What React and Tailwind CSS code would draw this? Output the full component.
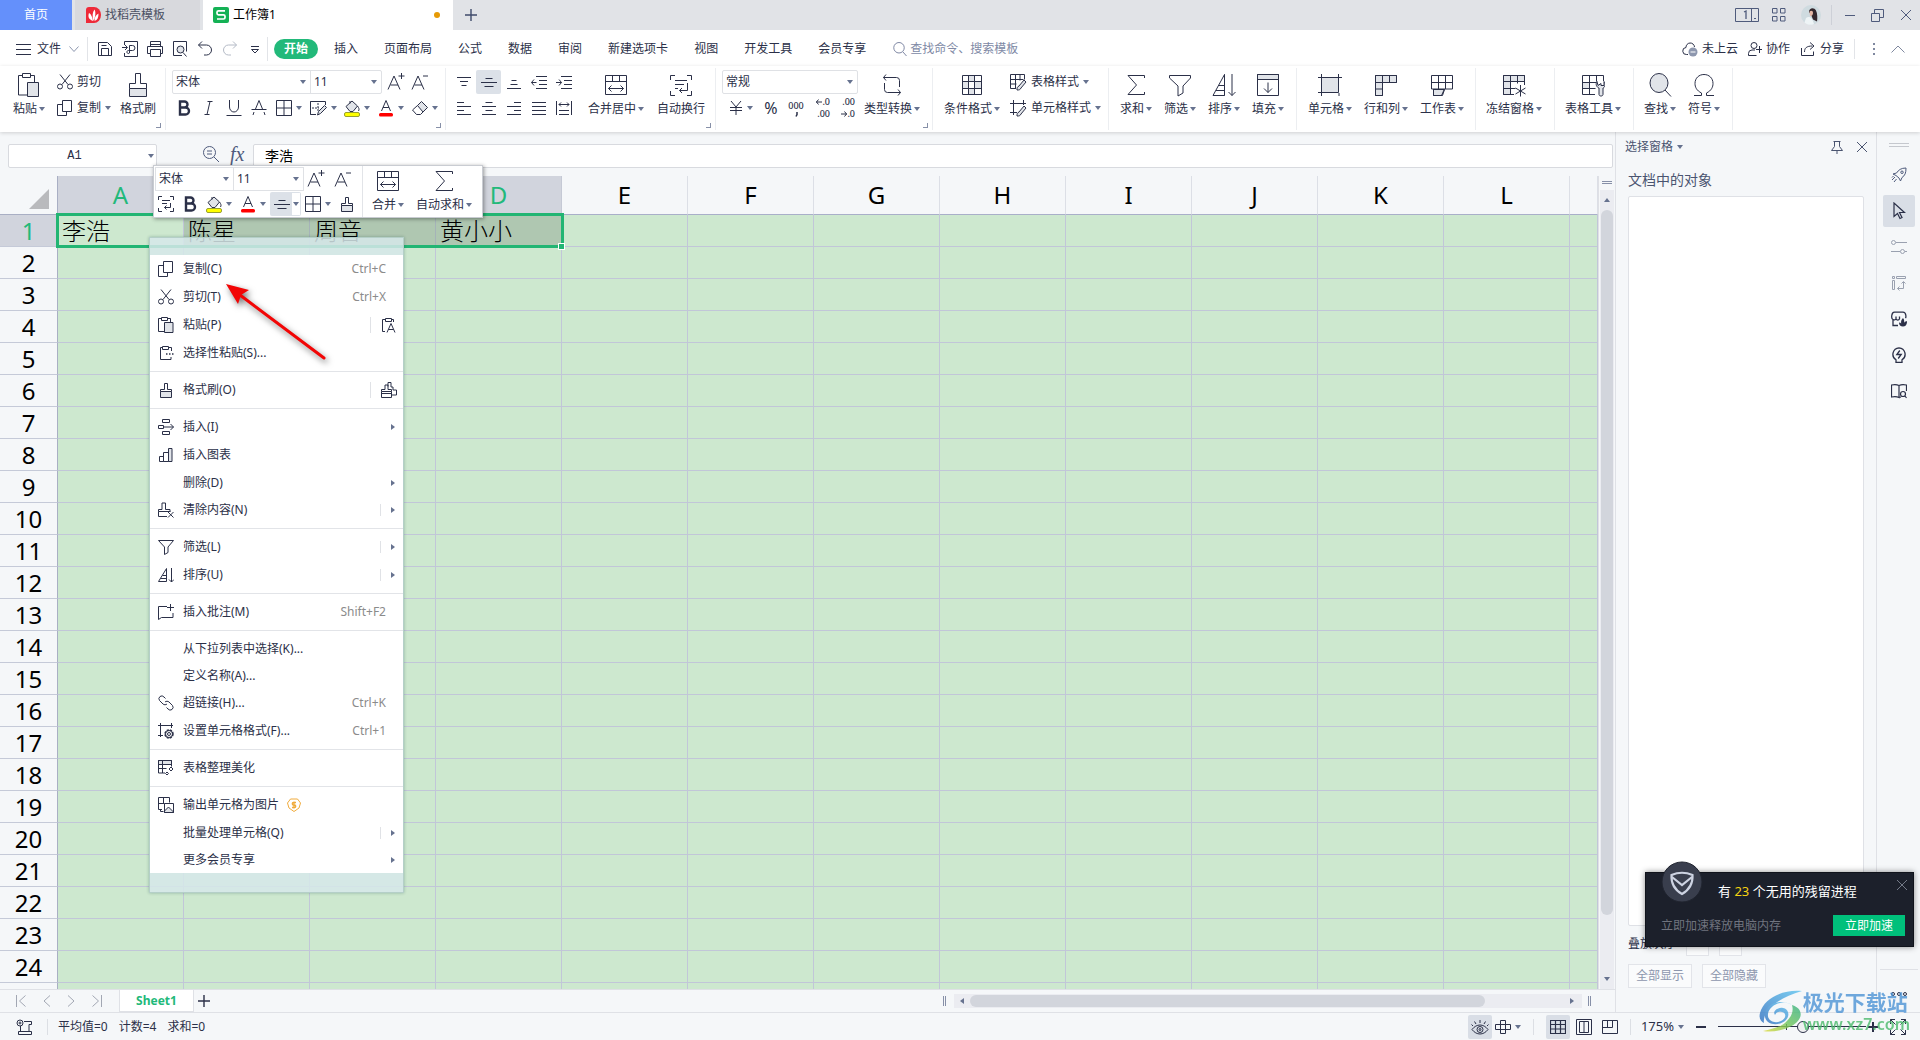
import { useState } from "react";

const SHADE = "#e1e4e9";

// icons: [width, height, drawing]
const icons = {
	caret: [6, 4, <path d="M0 0h6L3 4z" fill="#66728f" stroke="none" />],
	caretRight: [4, 6, <path d="M0 0v6l4-3z" fill="#66728f" stroke="none" />],
	plus: [12, 12, <path d="M6 0v12M0 6h12" strokeWidth="1.400" />],
	close: [12, 12, <path d="M1 1l10 10M11 1L1 11" />],
	burger: [15, 12, <path d="M0 1.5h15M0 6.5h15M0 11.5h15" />],
	chevronDown: [10, 8, <path d="M.5 1.5L5 6.5l4.5-5" />],
	chevronUp: [14, 8, <path d="M.5 7.5L7 1l6.5 6.5" />],
	save: [16, 16, <path d="M1.500 1.500h9l4 4v9h-13zM4.500 14.500v-7h7v7M4.500 4.500h5" />],
	exportFile: [16, 16, <path d="M2.500 4V.5h13v15h-13V12M0 6.500h5M3 4l2.500 2.500L3 9M7.500 12v-7.500h3a2 2 0 0 1 0 5H6.500a1.500 1.500 0 1 0 1 2.500" />],
	print: [16, 16, <path d="M3.500 5.500v-5h10v5M3.500 12.500h-3v-7h15v7h-2M3.500 8.500h10v7h-10zM3.500 3.500h10" />],
	preview: [16, 16, <><path d="M10 14.500H1.500V.5h13v10" /><circle cx="8.500" cy="8.500" r="3.500" fill={SHADE} /><path d="M11 11.500l3.500 4" /></>],
	undo: [16, 16, <path d="M5 .5L1.500 4L5 7.500M1.500 4h8a5 5 0 0 1 0 10H7" />],
	redo: [16, 16, <path d="M11 .5l3.500 3.500L11 7.500M14.500 4h-8a5 5 0 0 0 0 10H9" />],
	more: [8, 9, <path d="M0 1.500h8M.5 4.500l3.500 3.500l3.500-3.500z" />],
	search: [14, 16, <path d="M6 1.500a5 5 0 1 1 0 10.500a5 5 0 0 1 0-10.500zM10 11l3.500 4" />],
	cloud: [16, 16, <><path d="M6 13.500H4.500a3.500 3.500 0 0 1-.5-7a4.200 4.200 0 0 1 8.500-.5" /><circle cx="11" cy="11" r="4.500" fill="#8d97ae" stroke="none" /><path d="M8.500 11h5" stroke="#fff" /></>],
	person: [14, 16, <path d="M6 1.500a3 3 0 1 1 0 6a3 3 0 0 1 0-6zM8.500 14.500h-8v-2a3.500 3.500 0 0 1 3.500-3.500h3M11.500 5v7M8 8.500h6" />],
	share: [16, 16, <path d="M1.500 7v7.500h12v-4M4.500 11c0-4 2-6 8-6M10 1.500l4 3.500l-4 3.500" />],
	window1: [24, 14, <><path d="M.5.5h23v13h-23zM16.500.5v13M19 10.500h2" /><path d="M9 4l2-1v8" strokeWidth="1.300" /></>],
	apps: [14, 14, <path d="M.5.5h4.500v4.500H.5zM8.500.5h4.500v4.500H8.500zM.5 8.500h4.500v4.500H.5zM8.500 8.500h4.500v4.500H8.500z" />],
	minimize: [10, 12, <path d="M0 6.500h10" />],
	restore: [13, 13, <path d="M.5 4.500h8v8h-8zM3.500 4.500v-4h9v8h-4" />],

	paste: [24, 24, <><path d="M10 22H1.500V2.500h4M13.500 2.500h4V9M5.500.5h8v4h-8z" /><path d="M10.500 9.500h11v14h-11z" fill={SHADE} /></>],
	cut: [16, 16, <path d="M3 .5l8 10M13 .5l-8 10M3 10a2.500 2.500 0 1 1 0 5a2.500 2.500 0 0 1 0-5zM13 10a2.500 2.500 0 1 1 0 5a2.500 2.500 0 0 1 0-5z" />],
	copy: [16, 16, <path d="M5.500.5h9v11h-9zM5.500 4.500h-5v11h9v-4" />],
	brush: [24, 24, <><path d="M3.500 15.500h17v8h-17z" fill={SHADE} /><path d="M3.500 15.500v-5h6V.5h5v10h6v5" /></>],
	brushSm: [16, 16, <><path d="M2.500 9.500h11v6h-11z" fill={SHADE} /><path d="M2.500 9.500v-2h4v-6h3v6h4v2" /></>],
	fontUp: [18, 18, <path d="M1 16.500L7 3l6 13.500M3.500 12h7.500M14.500 0v6M11.500 3h6" />],
	fontDown: [18, 18, <path d="M1 16.500L7 3l6 13.500M3.500 12h7.500M12 3h5" />],
	bold: [16, 16, <path d="M4 1.500h4.500a3 3 0 0 1 0 6H4zM4 7.500h5.500a3.200 3.200 0 0 1 0 7H4z" strokeWidth="2.400" />],
	italic: [16, 16, <path d="M6.500 1.500h5M3.500 14.500h5M9 1.500L6 14.500" />],
	underline: [16, 16, <path d="M3.500 0v7a4.500 5 0 0 0 9 0V0M.5 15.500h15" />],
	strike: [16, 16, <path d="M4.500 9L8 .5L11.500 9M3 12l-1 3M13 12l1 3M.5 9.500h15" />],
	border: [16, 16, <path d="M.5.5h15v15H.5zM8 .5v15M.5 8h15" />],
	borderPen: [17, 16, <><path d="M6 14.500H.5V1.500h15V5M.5 1.500v13" /><path d="M8 3v8M2 8h7" strokeDasharray="2 1" /><path d="M7.500 15l1-3.500l6-6l2 2l-6 6z" fill={SHADE} /></>],
	fill: [16, 17, <><path d="M2 6.500L8 1l5.500 5L9 11.500H6z" fill={SHADE} /><path d="M6 3.500V1M13.500 6c1.500 2 2 3.500 1 5" /><rect x=".5" y="12.500" width="15" height="4" rx="1.500" fill="#ffff00" stroke="#98a030" /></>],
	fontColor: [16, 17, <><path d="M3.500 11L8 .5L12.500 11M5 7.500h6" /><rect x="1" y="13" width="14" height="3.500" rx="1.500" fill="#f00" stroke="none" /></>],
	eraser: [16, 16, <><path d="M5.500 5.500L9.500 1.500l6 6l-4.500 4.500z" fill={SHADE} /><path d="M5.500 5.500L.5 10l4 4.500h4l2.500-2.500" /></>],

	alignTop: [16, 16, <path d="M1 3.500h14M4 7.500h8M5.500 11.500h5" />],
	alignMiddle: [16, 16, <path d="M4.500 4.500h7M0 8.500h16M3.500 12.500h9" />],
	alignBottom: [16, 16, <path d="M5.500 6.500h5M4.500 10.500h7M1 14.500h14" />],
	outdent: [16, 16, <path d="M5 2.500h11M8 6.500h8M8 10.500h8M5 14.500h11M.5 8.500h5M3 5.500L.5 8.500L3 11.500" />],
	indent: [16, 16, <path d="M5 2.500h11M8 6.500h8M8 10.500h8M5 14.500h11M0 8.500h5.500M3 5.500L5.500 8.500L3 11.500" />],
	alignLeft: [16, 16, <path d="M1 2.500h7M1 6.500h14M1 10.500h7M1 14.500h14" />],
	alignCenter: [16, 16, <path d="M4.500 2.500h7M1 6.500h14M4.500 10.500h7M1 14.500h14" />],
	alignRight: [16, 16, <path d="M8 2.500h7M1 6.500h14M8 10.500h7M1 14.500h14" />],
	justify: [16, 16, <path d="M1 2.500h14M1 6.500h14M1 10.500h14M1 14.500h14" />],
	distribute: [16, 16, <path d="M.5 1v14M15.500 1v14M3 4.500h10M5 2.500l-2 2l2 2M11 2.500l2 2l-2 2M3 10.500h10M3 14.500h10" />],

	merge: [24, 24, <path d="M1.500 2.500h21v19h-21zM1.500 8.500h21M8.500 2.500v6M15.500 2.500v6M4.500 15.500h15M7.500 12.500l-3 3l3 3M16.500 12.500l3 3l-3 3" />],
	wrap: [24, 24, <path d="M6 2.500H1.500V7M18 2.500h4.500V7M6 22.500H1.500V18M18 22.500h4.500V18M6 7.500h12M6 11.500h9M6 15.500h3M18.500 10v7.500h-8M13 15l-2.500 2.500L13 20" />],
	wrapSm: [16, 16, <path d="M4 .5H.5V4M12 .5h3.500V4M4 15.500H.5V12M12 15.500h3.500V12M4 4.500h8M4 7.500h5M12.500 7v4.500h-6M8.500 9.500l-2 2l2 2" />],
	yen: [14, 14, <path d="M2 0l5 6l5-6M7 6v8M1 6.500h12M1 9.500h12" />],
	arrowLeft: [6, 6, <path d="M0 3h6M2.500.5L.5 3l2 2.500" />],
	arrowRight: [6, 6, <path d="M0 3h6M3.500.5L5.500 3l-2 2.500" />],
	comma: [3, 5, <path d="M2 0v2.500L1 4.500" strokeWidth="1.500" />],
	convert: [24, 24, <path d="M6 1.500L3.500 4.500L6 7.500M3.500 4.500h13a3 3 0 0 1 3 3V14M18 16.500l2.500 3l-2.500 3M20.500 19.500H7.500a3 3 0 0 1-3-3V10" />],
	condFormat: [24, 24, <><path d="M8.500 2.500h6v6h-6zM2.500 8.500h6v7h-6zM14.500 8.500h7v7h-7zM8.500 15.500h6v6h-6z" fill={SHADE} /><path d="M2.500 2.500h19v19h-19zM2.500 8.500h19M2.500 15.500h19M8.500 2.500v19M14.500 2.500v19" /></>],
	tableStyle: [17, 17, <><path d="M6 14.500H.5V.5h14v5M.5 5.500h13M.5 10h6M5.500.5v14M10 .5v6" /><path d="M7 16c0-2 0-3 2-4l5-6l2 2l-5 6c-1 2-2 2-4 2z" fill={SHADE} /></>],
	cellStyle: [17, 17, <><path d="M3.500 0v15M0 3.500h16M13.500 0v5M0 12.500h7" /><path d="M7 16c0-2 0-3 2-4l5-6l2 2l-5 6c-1 2-2 2-4 2z" fill={SHADE} /></>],
	sum: [24, 24, <path d="M20.500 5V2.500H4l8.500 9.500L4 21.500h16.500V19" />],
	funnel: [24, 24, <path d="M1.500 2.500h21V5l-7.500 8v7l-5 3v-10L1.500 5z" />],
	sort: [24, 24, <path d="M12.500 1.500L1 22.500h11.500zM7 12.500h5.500M4 17.500h8.500M12.500 1.500v21M20 1v21.500M16.500 19l3.500 3.500l3.500-3.500" />],
	fillDown: [24, 24, <><path d="M1.500 1.500h21v5h-21z" fill={SHADE} /><path d="M1.500 1.500h21v21h-21zM12 9.500v10M8 15.500l4 4l4-4" /></>],
	cell: [24, 24, <><path d="M3.500 4.500h17v15h-17z" fill={SHADE} /><path d="M0 4.500h24M3.500 1v22M20.500 1v17M0 19.500h19M21 20v3" /></>],
	rowCol: [24, 24, <><path d="M1.500 2.500h21v7H8.500v13h-7z" fill={SHADE} /><path d="M1.500 2.500h21v7H8.500v13h-7zM8.500 2.500v7M15.500 2.500v7M1.500 9.500h7M1.500 16h7" /></>],
	sheet: [24, 24, <><path d="M3.500 16.500h11l-2 6h-9z" fill={SHADE} /><path d="M1.500 2.500h21v13.500h-21zM1.500 9.500h21M8.500 2.500v13.500M15.500 2.500v13.500M3.500 16v6.500h8l3-6.500" /></>],
	freeze: [24, 24, <><path d="M1.500 2.500h21v6h-14v13h-7z" fill={SHADE} /><path d="M12 21.500H1.500v-19h21V12M1.500 8.500h21M1.500 15.500h12M8.500 2.500v19M15.500 2.500v8M18.500 12v11.500M13.500 15l10 6M23.500 15l-10 6" /></>],
	tableTool: [24, 24, <><path d="M1.500 9.500h7v6h-7z" fill={SHADE} /><path d="M14 21.500H1.500v-19h21V8M1.500 9.500h14M1.500 15.500h13M8.500 2.500v19M15.500 2.500v6" /><path d="M16 8.500c-2 3 0 6 2 6.500v6.500c0 2 4 2 4 0V15c2-.5 3-4 1-6.500v4h-3v-2l-3 2z" fill={SHADE} /></>],
	find: [24, 24, <><ellipse cx="11" cy="10" rx="9" ry="9.500" fill={SHADE} /><path d="M17 17l6 6.500" /></>],
	omega: [24, 24, <path d="M2 22.500h7.500v-2.500C4.500 17.500 3 14 3 10.500C3 5 7 1.500 12 1.500s9 3.500 9 9c0 3.500-1.500 7-6.500 9.500v2.500H22" />],

	pin: [14, 14, <path d="M3.500 1.500h7M4.500 1.500v5l-3 4h11l-3-4v-5M7 10.500V14" />],
	zoomMinus: [18, 18, <path d="M7.500 1.500a6 6 0 1 1 0 12a6 6 0 0 1 0-12zM12 12l5 5M5 6h5M5 9h5" />],
	rocket: [16, 16, <path d="M15 1C10 1 7.500 3 5.500 6L2 7l3 1.500L8 11l1.500 3L11 10.500C14 8.500 15 6 15 1zM11 4a1 1 0 1 1 0 2.500a1 1 0 0 1 0-2.500zM4 10l-3 3M5.500 12l-2.500 3M2.500 9L1 10.500" />],
	pointer: [14, 18, <path d="M2 1v13.500l3.500-3l2.500 5l2-1l-2.500-5H12.500z" strokeWidth="1.200" />],
	sliders: [16, 16, <path d="M0 12.500h9M14 12.500h2M5 3.500h11M2.500 1.500a2 2 0 1 1 0 4a2 2 0 0 1 0-4zM11.500 10.500a2 2 0 1 1 0 4a2 2 0 0 1 0-4z" />],
	layout: [16, 16, <path d="M1.500 1.500h2v2h-2zM5.500 1.500h9v2h-9zM1.500 5.500h2v9h-2zM12.500 7v6.500h-6M10.500 8.500l2-2l2 2M8.500 11.500l-2 2l2 2" />],
	store: [16, 16, <><path d="M7 14.500H2V8.500C.5 8 .5 6.500.8 4.500C1 2.500 2 1.200 3.500 1.200h8.500c1.500 0 2.500 1 2.800 3c.2 1.300.2 2.300-.3 3M5 5.500v2.500M8.500 5.500v2.500M5 8a2 2 0 0 1-3 .5M8.500 8a2 2 0 0 1-3.500 0" strokeWidth="1.300" /><path d="M8 11.500c1 0 1.700.3 2.200 1c-.5-2 .3-4 1.800-5.500c1.200 1.500 1.500 3 1 4.800c.5-1 1.500-1.600 3-1.600c.2 3-1.500 5.300-4 5.300s-4-1.500-4-4z" fill="currentColor" stroke="none" /></>],
	bulb: [16, 16, <path d="M8 .8a6.500 6.500 0 0 1 3 12v2.700H5v-2.700A6.500 6.500 0 0 1 8 .8zM8.800 3.500l-3 4h4.400l-3 4" strokeWidth="1.300" />],
	book: [16, 16, <path d="M8 2.500C6 1.500 3 1.500.5 2v12c2.500-.5 5.500-.5 7.500.5V2.500c2-1 5-1 7.500-.5v6M12 8.500a2.500 2.500 0 1 1 0 5a2.500 2.500 0 0 1 0-5zM14 13l1.500 2M8 14.500l2-.5" strokeWidth="1.200" />],

	pasteSm: [16, 16, <><path d="M6 14.500H.5V1.500h3M9.500 1.500h3V5M3.500.5h6v3h-6z" /><path d="M6.500 5.500h8.500v10H6.500z" fill={SHADE} /></>],
	pasteSpecial: [16, 16, <><path d="M13.500 6V2.500h-3M4.500 2.500h-2v12H13V12M4.500 1.500h6v3h-6z" /><path d="M8 9h1.500M11 9h1.500M14 9h1.500" strokeWidth="1.500" /></>],
	pasteText: [16, 16, <path d="M4 14.500H1.500V2.500h3M10.500 2.500h2V5M4.500 1.500h6v3h-6zM6 15.500L10 6.500l4 9M7.500 12.500h5" />],
	brushes: [16, 16, <path d="M.5 9.500h10v6H.5zM.5 9.500v-2H4V3h3v4.500h3.500v2M7 4.500V.5h3v4.500h2v3h3.500v5h-5M.5 11.500h10" />],
	insert: [16, 16, <path d="M4.500.5h7v3h-7zM.5 6.500h5v3h-5zM4.500 12.500h7v3h-7zM6 8h9.500M12.500 5l3 3l-3 3" />],
	chart: [16, 16, <><path d="M10.500 1.500h3.500v13h-3.500z" fill={SHADE} /><path d="M1.500 9.500h4v5h-4zM5.500 5.500h5v9h-5z" /></>],
	clear: [16, 16, <path d="M9 14.500H.5V9.500h12M.5 9.500v-2H4V1h3.500v6.500H12v2M10 10l5.500 5.500M15.500 10L10 15.500" />],
	funnelSm: [16, 16, <path d="M.5 1.500h15L10 8v5.500L6.500 15.500V8z" />],
	sortSm: [16, 16, <path d="M8.500 1.500L.5 14.500h8zM4.500 8.500h4M2.500 11.500h6M13.500 1v14M11 12.500l2.500 2.500l2.500-2.500" />],
	comment: [16, 16, <path d="M9 2.500H.5v13l3-2h11.500V9M12.500 0v7M9 3.500h7" />],
	link: [16, 16, <path d="M7.500 3.500L6 2A3 3 0 0 0 2 1.500A3 3 0 0 0 1.500 5.500L5 9c1 1 3 1 4 0M8.500 12.500l1.500 1.500a3 3 0 0 0 4 .5a3 3 0 0 0 .5-4L11 7c-1-1-3-1-4 0" />],
	cellGear: [16, 16, <><path d="M2.500 0v14M0 2.500h15M13.500 0v5M0 12.500h5" /><circle cx="11" cy="11" r="4" strokeWidth="1.500" strokeDasharray="2.200 1" /><circle cx="11" cy="11" r="3.500" /><circle cx="11" cy="11" r="1.500" /></>],
	beautify: [16, 16, <><path d="M.5.5h13v4H.5z" fill={SHADE} /><path d="M7 13H.5V.5h13v6M.5 4.500h13M.5 8.500h8M4.500.5V13M13 7l2 2l-2 2l-2-2zM9 12l1.500 1.500L9 15l-1.500-1.500z" /></>],
	exportPic: [16, 16, <><path d="M6.500 14l4-4l5 5v.500h-9z" fill={SHADE} /><path d="M15.500 15.500h-9v-9h9zM4 12.500H.5V.5h11v5M.5 6.500h6M5.500.5v6M2.500 12.500v2h3" /></>],
	camera: [16, 16, <path d="M4 1a3 3 0 1 1 0 6a3 3 0 0 1 0-6zM4 3a1 1 0 1 1 0 2a1 1 0 0 1 0-2zM8 2.500h7.500v3H13v7h2.500v3h-13v-3H13M4.500 7v5" />],
	first: [11, 12, <path d="M.5 0v12M9.500.5L3.500 6l6 5.500" />],
	prev: [8, 12, <path d="M7 .5L1 6l6 5.500" />],
	next: [8, 12, <path d="M1 .5L7 6l-6 5.500" />],
	last: [11, 12, <path d="M10.500 0v12M1.500.5l6 5.500l-6 5.500" />],
	eye: [18, 16, <path d="M1 10.500c4.500-6 11.500-6 16 0c-4.500 6-11.500 6-16 0zM9 7.500a3 3 0 1 1 0 6a3 3 0 0 1 0-6zM9 9.500a1 1 0 1 1 0 2a1 1 0 0 1 0-2zM9 4V1M5 5L3.500 2.500M13 5l1.500-2.500M2 7L.5 5.500M16 7l1.500-1.500" />],
	cross: [16, 16, <path d="M5.500 1.500h5v13h-5zM.5 5.500h15v5H.5z" />],
	viewGrid: [16, 16, <path d="M.5 1.500h15v13H.5zM.5 5.500h15M.5 10h15M5.500 1.500v13M10.500 1.500v13" strokeWidth="1.200" />],
	viewPage: [16, 16, <path d="M.5.5h15v15H.5zM3.500 2.500h9v11h-9zM8 2.500v11" />],
	viewBreak: [16, 16, <path d="M.5 1.500h15v13H.5zM5.500 1.500v7M10.500 1.500v7M.5 8.500h10" />],
	fullscreen: [16, 16, <path d="M5 .5H.5V5M11 .5h4.500V5M5 15.500H.5V11M11 15.500h4.500V11M.5.5l5 5M15.500.5l-5 5M.5 15.500l5-5M15.500 15.500l-5-5" />],
};

const Icon = ({ name, className = "" }) => {
	const [w, h, drawing] = icons[name];
	return (
		<svg width={w} height={h} viewBox={`0 0 ${w} ${h}`} fill="none" stroke="currentColor" aria-hidden="true" className={`shrink-0 ${className}`}>
			{drawing}
		</svg>
	);
};

const Caret = ({ className }) => <Icon name="caret" className={className} />;

// icon over label
const BigButton = ({ icon, label, caret = true, className = "mt-[5px]" }) => (
	<button type="button" className={`flex shrink-0 flex-col items-center gap-1 ${className}`}>
		<Icon name={icon} />
		<span className="flex items-center gap-0.5 whitespace-nowrap">
			{label}
			{caret && <Caret />}
		</span>
	</button>
);

// icon beside label
const RowButton = ({ icon, label, caret }) => (
	<button type="button" className="flex h-[26px] items-center gap-1 whitespace-nowrap">
		<Icon name={icon} />
		{label}
		{caret && <Caret />}
	</button>
);

const ToolButton = ({ icon, label, caret, className = "" }) => (
	<button type="button" aria-label={label} className={`flex h-6 items-center justify-center gap-1 ${className}`}>
		<Icon name={icon} />
		{caret && <Caret />}
	</button>
);

const Group = ({ corner, className, children }) => (
	<div className={`relative mt-0.5 flex h-[62px] shrink-0 items-start border-r border-[#eceef1] ${className}`}>
		{children}
		{corner && <span className="absolute right-1 bottom-[2px] h-[5px] w-[5px] border-r border-b border-[#8790a8]" />}
	</div>
);

const Dropdown = ({ label, value, className }) => (
	<span className={`flex items-center pr-1 pl-[3px] ${className}`}>
		<select aria-label={label} className="min-w-0 flex-1 appearance-none bg-transparent outline-none">
			<option>{value}</option>
		</select>
		<Caret />
	</span>
);

const TitleBar = () => (
	<header className="flex h-[30px] shrink-0 items-center bg-[#e1e3e7]">
		<button type="button" className="h-full w-[72px] bg-[#6490fb] text-white">
			首页
		</button>
		<button type="button" className="ml-[3px] flex h-full w-[125px] items-center gap-1 bg-[#d8d9dd] pl-[11px] text-[#4b5063]">
			<svg width="15" height="16" viewBox="0 0 15 16" aria-hidden="true">
				<path d="M0 3a3 3 0 0 1 3-3h5a7 8 0 0 1 0 16H0z" fill="#ee2a38" />
				<path d="M7 14C2 12 2 9 3 6c2 1 3.500 4 4 8zM7.500 14C6 9 6.500 5 8.500 2.500C10 5 9.500 10 7.500 14zM8.500 14c0-4 1.500-6 4-7.500c0 4-1 6.500-4 7.500z" fill="#fff" />
			</svg>
			找稻壳模板
		</button>
		<button type="button" className="ml-[3px] flex h-full w-[250px] items-center gap-1 bg-white pr-[13px] pl-[10px] text-black">
			<svg width="16" height="16" viewBox="0 0 16 16" aria-hidden="true">
				<rect width="16" height="16" rx="2" fill="#14b155" />
				<path d="M12 3.800H5.500a1.500 1.500 0 0 0-1.500 1.500v1a1.500 1.500 0 0 0 1.500 1.500h5a1.500 1.500 0 0 1 1.500 1.500v1.200a1.500 1.500 0 0 1-1.500 1.500H4" fill="none" stroke="#fff" strokeWidth="1.700" />
			</svg>
			工作簿1
			<span className="ml-auto h-[6px] w-[6px] rounded-full bg-[#e69a05]" />
		</button>
		<button type="button" aria-label="新建" className="ml-3 text-[#3f4b6b]">
			<Icon name="plus" />
		</button>
		<div className="ml-auto flex items-center pr-2 text-[#4f5b7c]">
			<Icon name="window1" />
			<Icon name="apps" className="ml-[13px]" />
			<svg width="20" height="20" viewBox="0 0 20 20" className="ml-[15px]" aria-hidden="true">
				<circle cx="10" cy="10" r="10" fill="#cfdbe0" />
				<path d="M8 7c0-4 5-5 7-1.500c1.500 3 1.500 8 1 11l-4-2l-2-5z" fill="#32262c" />
				<path d="M8.500 6.500c2-1.500 3.500-.5 3.500 1.500s-1.500 3.500-3 3z" fill="#e5b7a5" />
				<path d="M5 13c3-2 6-1 8 6c-3 1.500-7 1-9.500-1.500z" fill="#eef4f6" />
			</svg>
			<span className="mx-[10px] h-5 w-px bg-[#cdd0d7]" />
			<button type="button" aria-label="最小化" className="ml-[3px]"><Icon name="minimize" /></button>
			<button type="button" aria-label="还原" className="ml-4"><Icon name="restore" /></button>
			<button type="button" aria-label="关闭" className="ml-4"><Icon name="close" /></button>
		</div>
	</header>
);

const menus = ["插入", "页面布局", "公式", "数据", "审阅", "新建选项卡", "视图", "开发工具", "会员专享"];

const quickTools = [
	["save", "保存"],
	["exportFile", "输出"],
	["print", "打印"],
	["preview", "打印预览"],
	["undo", "撤销"],
	["redo", "恢复"],
	["more", "更多"],
];

const MenuBar = () => (
	<nav className="flex h-9 shrink-0 items-center bg-white pt-0.5">
		<button type="button" className="flex items-center pl-4">
			<Icon name="burger" className="mr-1.5" />
			文件
			<Icon name="chevronDown" className="ml-2 text-[#8d97ae]" />
		</button>
		<span className="ml-2 h-6 w-px bg-[#e2e4e8]" />
		<div className="ml-1 flex">
			{quickTools.map(([icon, label]) => (
				<ToolButton key={icon} icon={icon} label={label} className={icon === "redo" ? "w-[25px] text-[#b4bac6]" : "w-[25px]"} />
			))}
		</div>
		<span className="h-6 w-px bg-[#e2e4e8]" />
		<button type="button" className="ml-1.5 h-5 rounded-full bg-[#22b97a] px-2.5 font-bold text-white">
			开始
		</button>
		<div className="ml-4 flex gap-[26px] whitespace-nowrap">
			{menus.map((menu) => (
				<button type="button" key={menu}>
					{menu}
				</button>
			))}
		</div>
		<label className="ml-[27px] flex items-center gap-[3px] text-[#8089a5]">
			<Icon name="search" />
			<input aria-label="搜索" placeholder="查找命令、搜索模板" className="w-32 outline-none placeholder:text-[#8089a5]" />
		</label>
		<div className="ml-auto flex items-center gap-[10px] whitespace-nowrap">
			<RowButton icon="cloud" label="未上云" />
			<RowButton icon="person" label="协作" />
			<RowButton icon="share" label="分享" />
			<span className="h-5 w-px bg-[#e2e4e8]" />
			<span className="flex w-2.5 flex-col items-end gap-[3px]">
				<i className="h-0.5 w-0.5 bg-[#7f889f]" />
				<i className="h-0.5 w-0.5 bg-[#7f889f]" />
				<i className="h-0.5 w-0.5 bg-[#7f889f]" />
			</span>
			<button type="button" aria-label="收起功能区" className="mr-[15px] ml-1.5 text-[#7f889f]">
				<Icon name="chevronUp" />
			</button>
		</div>
	</nav>
);

const alignTools = [
	["alignTop", "顶端对齐"],
	["alignMiddle", "垂直居中"],
	["alignBottom", "底端对齐"],
	["outdent", "减少缩进"],
	["indent", "增加缩进"],
	["alignLeft", "左对齐"],
	["alignCenter", "居中"],
	["alignRight", "右对齐"],
	["justify", "两端对齐"],
	["distribute", "分散对齐"],
];

const Ribbon = () => (
	<section className="relative z-10 flex h-[66px] shrink-0 bg-white shadow-[0_1px_4px_rgba(0,0,0,0.16)]">
		<Group corner className="w-[166px] pl-[13px]">
			<BigButton icon="paste" label="粘贴" />
			<div className="mt-px ml-3">
				<RowButton icon="cut" label="剪切" />
				<RowButton icon="copy" label="复制" caret />
			</div>
			<BigButton icon="brush" label="格式刷" caret={false} className="mt-[5px] ml-[9px]" />
		</Group>
		<Group corner className="w-[280px] flex-col pl-1.5">
			<div className="mt-0.5 flex items-center">
				<div className="flex h-6 w-[210px] divide-x divide-[#dfe1e5] rounded-xs border border-[#dfe1e5]">
					<Dropdown label="字体" value="宋体" className="w-[138px]" />
					<Dropdown label="字号" value="11" className="flex-1" />
				</div>
				<ToolButton icon="fontUp" label="增大字号" className="ml-[5px]" />
				<ToolButton icon="fontDown" label="减小字号" className="ml-1.5" />
			</div>
			<div className="mt-0.5 flex items-center">
				<ToolButton icon="bold" label="加粗" className="ml-1" />
				<ToolButton icon="italic" label="倾斜" className="ml-[9px]" />
				<ToolButton icon="underline" label="下划线" className="ml-[9px]" />
				<ToolButton icon="strike" label="删除线" className="ml-[9px]" />
				<ToolButton icon="border" label="边框" caret className="ml-[9px]" />
				<ToolButton icon="borderPen" label="绘制边框" caret className="ml-2" />
				<ToolButton icon="fill" label="填充颜色" caret className="ml-[7px]" />
				<ToolButton icon="fontColor" label="字体颜色" caret className="ml-2" />
				<ToolButton icon="eraser" label="清除" caret className="ml-2" />
			</div>
		</Group>
		<Group corner className="w-[270px] pl-[5px]">
			<div className="mt-0.5 grid grid-cols-[repeat(5,25px)] gap-y-0.5">
				{alignTools.map(([icon, label]) => (
					<ToolButton key={icon} icon={icon} label={label} className={icon === "alignMiddle" ? "rounded-xs bg-[#dce1e8]" : ""} />
				))}
			</div>
			<BigButton icon="merge" label="合并居中" className="mt-[5px] ml-3" />
			<BigButton icon="wrap" label="自动换行" caret={false} className="mt-[5px] ml-[13px]" />
		</Group>
		<Group corner className="w-[217px] pl-1.5">
			<div className="mt-0.5">
				<Dropdown label="数字格式" value="常规" className="h-6 w-[136px] rounded-xs border border-[#dfe1e5]" />
				<div className="mt-0.5 flex h-6 items-center pl-[7px] leading-none">
					<ToolButton icon="yen" label="货币" className="w-3.5" />
					<Caret className="ml-1" />
					<button type="button" className="ml-[10px] w-4 text-base leading-6">%</button>
					<button type="button" className="ml-2 flex w-[18px] flex-col items-center text-[9px] leading-[12px] font-medium">
						000
						<Icon name="comma" />
					</button>
					<button type="button" aria-label="增加小数位数" className={styles.decimal}>
						<span className="flex items-center"><Icon name="arrowLeft" />.0</span>
						<span>.00</span>
					</button>
					<button type="button" aria-label="减少小数位数" className={styles.decimal}>
						<span>.00</span>
						<span className="flex items-center"><Icon name="arrowRight" />.0</span>
					</button>
				</div>
			</div>
			<BigButton icon="convert" label="类型转换" className="mt-[5px] ml-1.5" />
		</Group>
		<Group className="w-[176px] pl-[11px]">
			<BigButton icon="condFormat" label="条件格式" />
			<div className="mt-px ml-[10px]">
				<RowButton icon="tableStyle" label="表格样式" caret />
				<RowButton icon="cellStyle" label="单元格样式" caret />
			</div>
		</Group>
		<Group className="w-[188px] gap-3 pl-[11px]">
			<BigButton icon="sum" label="求和" />
			<BigButton icon="funnel" label="筛选" />
			<BigButton icon="sort" label="排序" />
			<BigButton icon="fillDown" label="填充" />
		</Group>
		<Group className="w-[179px] gap-3 pl-[11px]">
			<BigButton icon="cell" label="单元格" />
			<BigButton icon="rowCol" label="行和列" />
			<BigButton icon="sheet" label="工作表" />
		</Group>
		<Group className="w-[79px] pl-[10px]">
			<BigButton icon="freeze" label="冻结窗格" />
		</Group>
		<Group className="w-[79px] pl-[10px]">
			<BigButton icon="tableTool" label="表格工具" />
		</Group>
		<Group className="w-[99px] gap-3 pl-[10px]">
			<BigButton icon="find" label="查找" />
			<BigButton icon="omega" label="符号" />
		</Group>
	</section>
);

const FormulaBar = () => (
	<div className="flex h-11 shrink-0 items-center pr-0.5 pl-2">
		<div className="mt-1 flex h-6 w-[149px] items-center rounded-xs border border-[#d8dadf] bg-white pr-0.5">
			<input aria-label="名称框" defaultValue="A1" className="w-full min-w-0 pr-2 text-center font-['Liberation_Mono',monospace] outline-none" />
			<Caret />
		</div>
		<Icon name="zoomMinus" className="ml-[45px] text-[#4f5b7c]" />
		<span className="ml-2.5 w-5 font-['Liberation_Serif',serif] text-xl leading-6 text-[#4f5b7c] italic">fx</span>
		<input aria-label="编辑栏" defaultValue="李浩" className="mt-1 ml-[3px] h-6 min-w-0 flex-1 rounded-xs border border-[#d8dadf] bg-white pb-0.5 pl-[11px] text-sm text-black outline-none" />
	</div>
);

const columns = ["A", "B", "C", "D", "E", "F", "G", "H", "I", "J", "K", "L"];
const rows = Array.from({ length: 24 }, (_, i) => i + 1);
const names = ["李浩", "陈星", "周音", "黄小小"];

const Sheet = () => (
	<div className="relative min-w-0 flex-1 overflow-hidden border-r border-[#dfe0e5]">
		<table className="w-full table-fixed border-separate border-spacing-0">
			<colgroup>
				<col className="w-[58px]" />
				{columns.map((c) => (
					<col key={c} className="w-[126px]" />
				))}
				<col />
			</colgroup>
			<thead>
				<tr className="h-[39px] text-2xl leading-7 text-black">
					<th scope="col" className={styles.corner}>
						<svg width="20" height="20" viewBox="0 0 20 20" className="mt-2 mr-2 ml-auto" aria-label="全选">
							<path d="M20 0v20H0z" fill="#b9babd" />
						</svg>
					</th>
					{columns.map((c, i) => (
						<th scope="col" key={c} className={i < 4 ? styles.colOn : styles.col}>
							{c}
						</th>
					))}
					<th className={styles.col} />
				</tr>
			</thead>
			<tbody>
				{rows.map((r) => (
					<tr key={r} className="h-8">
						<th scope="row" className={r === 1 ? styles.rowOn : styles.row}>
							{r}
						</th>
						{columns.map((c, i) => (
							<td key={c} className={r === 1 && i > 0 && i < 4 ? styles.cellOn : styles.cell}>
								{r === 1 && names[i]}
							</td>
						))}
						<td className={styles.cell} />
					</tr>
				))}
				{/* row under the fold */}
				<tr className="h-8">
					<th className={styles.row} />
					{columns.map((c) => (
						<td key={c} className={styles.cell} />
					))}
					<td className={styles.cell} />
				</tr>
			</tbody>
		</table>
		{/* selection frame */}
		<div className="pointer-events-none absolute top-[37px] left-[56px] h-[35px] w-[508px] border-[3px] border-[#22b573]">
			<span className="absolute -right-1 -bottom-[5px] h-[7px] w-[7px] border border-white bg-[#22b573]" />
		</div>
	</div>
);

const MiniToolbar = () => (
	<div className="absolute top-[165px] left-[153px] z-20 flex h-[53px] w-[330px] border border-[#c9ccd2] bg-white shadow-[1px_1px_4px_rgba(0,0,0,0.4)]">
		<div className="w-[209px] border-r border-[#e2e4e8]">
			<div className="flex items-center pt-px pl-px">
				<div className="flex h-6 w-[149px] divide-x divide-[#dfe1e5] border border-[#dfe1e5]">
					<Dropdown label="字体" value="宋体" className="w-[78px]" />
					<Dropdown label="字号" value="11" className="flex-1" />
				</div>
				<ToolButton icon="fontUp" label="增大字号" className="ml-[3px]" />
				<ToolButton icon="fontDown" label="减小字号" className="ml-[9px]" />
			</div>
			<div className="mt-px flex items-center pl-1">
				<ToolButton icon="wrapSm" label="自动换行" />
				<ToolButton icon="bold" label="加粗" className="ml-2" />
				<ToolButton icon="fill" label="填充颜色" caret className="ml-2" />
				<ToolButton icon="fontColor" label="字体颜色" caret className="ml-2" />
				<button type="button" aria-label="对齐" className="ml-1 flex h-6 items-center rounded-xs bg-[#dce1e8] p-px pl-1">
					<Icon name="alignMiddle" className="mr-0.5" />
					<span className="flex h-full items-center bg-white px-px">
						<Caret />
					</span>
				</button>
				<ToolButton icon="border" label="边框" caret className="ml-1" />
				<ToolButton icon="brushSm" label="格式刷" className="ml-2" />
			</div>
		</div>
		<BigButton icon="merge" label="合并" className="mt-[3px] ml-[9px]" />
		<BigButton icon="sum" label="自动求和" className="mt-[3px] ml-3" />
	</div>
);

const menuGroups = [
	[
		{ icon: "copy", text: "复制(C)", key: "Ctrl+C" },
		{ icon: "cut", text: "剪切(T)", key: "Ctrl+X" },
		{ icon: "pasteSm", text: "粘贴(P)", extra: "pasteText" },
		{ icon: "pasteSpecial", text: "选择性粘贴(S)..." },
	],
	[{ icon: "brushSm", text: "格式刷(O)", extra: "brushes" }],
	[
		{ icon: "insert", text: "插入(I)", arrow: true },
		{ icon: "chart", text: "插入图表" },
		{ text: "删除(D)", arrow: true },
		{ icon: "clear", text: "清除内容(N)", arrow: true, split: true },
	],
	[
		{ icon: "funnelSm", text: "筛选(L)", arrow: true, split: true },
		{ icon: "sortSm", text: "排序(U)", arrow: true, split: true },
	],
	[{ icon: "comment", text: "插入批注(M)", key: "Shift+F2" }],
	[
		{ text: "从下拉列表中选择(K)..." },
		{ text: "定义名称(A)..." },
		{ icon: "link", text: "超链接(H)...", key: "Ctrl+K" },
		{ icon: "cellGear", text: "设置单元格格式(F)...", key: "Ctrl+1" },
	],
	[{ icon: "beautify", text: "表格整理美化" }],
	[
		{ icon: "exportPic", text: "输出单元格为图片", coin: true },
		{ text: "批量处理单元格(Q)", arrow: true, split: true },
		{ text: "更多会员专享", arrow: true },
	],
];

const MenuItem = ({ item }) => (
	<button type="button" role="menuitem" className={`flex w-full items-center pl-2 ${item.icon ? "h-7" : "h-[27px]"}`}>
		<span className="w-[25px]">{item.icon && <Icon name={item.icon} />}</span>
		{item.text}
		{item.coin && (
			<svg width="14" height="14" viewBox="0 0 14 14" className="ml-2" fill="none" stroke="#f0ab3c" aria-hidden="true">
				<path d="M3.500 1h7L13.500 5l-1.500 5l-5 3.500L2 10L.5 5z" />
				<path d="M9 4.500H6.500a1 1 0 0 0 0 2.500h1a1 1 0 0 1 0 2.500H5M7 3.500v7" strokeWidth="1.300" />
			</svg>
		)}
		{item.key && <span className="mr-[17px] ml-auto text-[#8b8b8b]">{item.key}</span>}
		{item.extra && (
			<span className="mr-1.5 ml-auto flex items-center border-l border-[#e0e2e6] pl-2.5">
				<Icon name={item.extra} />
			</span>
		)}
		{item.arrow && (
			<span className={`mr-2 ml-auto flex h-3 items-center pl-2.5 ${item.split ? "border-l border-[#e0e2e6]" : ""}`}>
				<Icon name="caretRight" />
			</span>
		)}
	</button>
);

const ContextMenu = () => (
	<div className="absolute top-[237px] left-[149px] z-20 border border-[#b4cfc8] bg-[#d6e7ea]/85 pt-[17px] pb-[19px] shadow-[0_0_3px_rgba(0,60,60,0.3)]">
		<div role="menu" className="w-[253px] bg-white">
			{menuGroups.map((group, i) => (
				<div key={i} role="group">
					{i > 0 && <hr className="my-1 h-px border-0 bg-[#e2e4e8]" />}
					{group.map((item) => (
						<MenuItem key={item.text} item={item} />
					))}
				</div>
			))}
		</div>
	</div>
);

// red pointer from the cells to the copy entry
const Arrow = () => (
	<svg width="120" height="96" viewBox="0 0 120 96" className="pointer-events-none absolute top-[276px] left-[218px] z-30 drop-shadow-[2px_3px_3px_rgba(0,0,0,0.55)]" aria-hidden="true">
		<path d="M22 19L106 82" stroke="#f20505" strokeWidth="3" strokeLinecap="round" />
		<path d="M8 8l23 6l-8 5l-3 9z" fill="#f20505" />
	</svg>
);

const SelectionPane = () => (
	<aside className="flex w-[261px] shrink-0 flex-col border-l border-[#dfe1e6] pt-[7px] text-[#4a5470]">
		<div className="flex h-4 items-center pl-[9px]">
			<h2>选择窗格</h2>
			<Caret className="ml-1" />
			<button type="button" aria-label="固定" className="ml-auto"><Icon name="pin" /></button>
			<button type="button" aria-label="关闭窗格" className="mr-2 ml-3"><Icon name="close" /></button>
		</div>
		<h3 className="mt-[15px] pl-3 text-sm leading-5">文档中的对象</h3>
		<div className="mt-1.5 mr-3 ml-3 flex-1 rounded-xs border border-[#dfe1e6] bg-white" />
		<div className="mt-1.5 flex h-6 items-center pl-3 text-[#2b3048]">
			叠放次序
			<button type="button" aria-label="上移" className="ml-[10px] flex h-full w-[23px] items-center justify-center border border-[#e2e4e9] bg-[#fafbfc]">
				<Caret className="rotate-180" />
			</button>
			<button type="button" aria-label="下移" className="ml-[10px] flex h-full w-[23px] items-center justify-center border border-[#e2e4e9] bg-[#fafbfc]">
				<Caret />
			</button>
		</div>
		<div className="mt-2 mb-6 flex gap-[10px] pl-3">
			<button type="button" className={styles.paneButton}>全部显示</button>
			<button type="button" className={styles.paneButton}>全部隐藏</button>
		</div>
	</aside>
);

const sideTools = [
	["rocket", "美化", "text-[#4f5b7c]"],
	["pointer", "选择", "bg-[#d9dee6] text-[#2b3048]"],
	["sliders", "属性", "text-[#9aa1b0]"],
	["layout", "布局", "text-[#9aa1b0]"],
	["store", "素材", "text-[#2b3048]"],
	["bulb", "智能", "text-[#2b3048]"],
	["book", "帮助", "text-[#2b3048]"],
];

const SideBar = () => (
	<aside className="flex w-11 shrink-0 flex-col items-center border-l border-[#dfe1e6] pt-[11px]">
		<span className="mb-3 h-1 w-5 border-y border-[#c5c8ce]" />
		<div className="flex flex-col gap-1">
			{sideTools.map(([icon, label, look]) => (
				<button type="button" key={icon} aria-label={label} className={`flex h-8 w-8 items-center justify-center rounded-xs ${look}`}>
					<Icon name={icon} />
				</button>
			))}
		</div>
		<span className="mt-auto h-px w-[38px] bg-[#dfe1e6]" />
		<span className="mt-[22px] mb-4 flex gap-0.5">
			<i className="h-1 w-1 rounded-full border border-[#2b3048]" />
			<i className="h-1 w-1 rounded-full border border-[#2b3048]" />
			<i className="h-1 w-1 rounded-full border border-[#2b3048]" />
		</span>
	</aside>
);

const VerticalScroll = () => (
	<div className="flex w-4 shrink-0 flex-col items-center px-px">
		<span className="mt-[5px] mb-1.5 h-[3px] w-2.5 border-y border-[#8790a8]" />
		<div className="flex w-3.5 flex-1 flex-col items-center bg-[#ebecf1]">
			<Caret className="my-2 rotate-180" />
			<span className="w-3 flex-1 rounded-full bg-[#d2d5dc]" />
			<Caret className="mt-[62px] mb-2" />
		</div>
	</div>
);

const SheetTabs = () => (
	<div className="flex h-[23px] shrink-0 items-center border-t border-[#dfe1e6] pl-4">
		<div className="flex w-[103px] items-center gap-4 text-[#a2a7b3]">
			<button type="button" aria-label="第一个"><Icon name="first" /></button>
			<button type="button" aria-label="上一个"><Icon name="prev" /></button>
			<button type="button" aria-label="下一个"><Icon name="next" /></button>
			<button type="button" aria-label="最后一个"><Icon name="last" /></button>
		</div>
		<button type="button" className="h-full w-[75px] border-x border-b border-[#dfe1e6] bg-white font-bold text-[#22b97a]">
			Sheet1
		</button>
		<button type="button" aria-label="新建工作表" className="ml-1"><Icon name="plus" /></button>
		<div className="mr-6 ml-auto flex h-4 w-[40.5%] items-center">
			<span className="mr-2 h-2.5 w-[3px] border-x border-[#8790a8]" />
			<div className="flex h-3.5 flex-1 items-center bg-[#ebecf1]">
				<Icon name="caretRight" className="mx-1.5 rotate-180" />
				<span className="h-3 w-[82%] rounded-full bg-[#d2d5dc]" />
				<Icon name="caretRight" className="mr-2 ml-auto" />
			</div>
			<span className="ml-1.5 h-2.5 w-[3px] border-x border-[#8790a8]" />
		</div>
	</div>
);

const StatusBar = () => {
	const [zoom, setZoom] = useState(58);

	return (
		<footer className="flex h-7 shrink-0 items-center border-t border-[#dfe1e6] pl-4">
			<Icon name="camera" />
			<span className="ml-[15px] h-4 w-px bg-[#dcdfe4]" />
			<p className="ml-2.5 flex gap-[11px]">
				<span>平均值=0</span>
				<span>计数=4</span>
				<span>求和=0</span>
			</p>
			<div className="ml-auto flex items-center">
				<ToolButton icon="eye" label="护眼模式" className="w-6 rounded-xs bg-[#d9dee6]" />
				<ToolButton icon="cross" label="阅读模式" caret className="ml-[3px]" />
				<span className="mx-3 h-4 w-px bg-[#dcdfe4]" />
				<ToolButton icon="viewGrid" label="普通视图" className="w-6 rounded-xs bg-[#d9dee6]" />
				<ToolButton icon="viewPage" label="页面布局" className="ml-1.5" />
				<ToolButton icon="viewBreak" label="分页预览" className="ml-2.5" />
				<span className="mr-2.5 ml-3 h-4 w-px bg-[#dcdfe4]" />
				<span className="text-[13px]">175%</span>
				<Caret className="ml-1" />
				<button type="button" aria-label="缩小" className="ml-3 h-0.5 w-2.5 bg-[#2b3048]" />
				<label className="relative ml-3 flex items-center">
					<span className="absolute left-[68px] h-1.5 w-px bg-[#2b3048]" />
					<input
						type="range"
						aria-label="缩放"
						value={zoom}
						onChange={(e) => setZoom(e.target.value)}
						className={styles.range}
					/>
				</label>
				<button type="button" aria-label="放大" className="relative ml-0.5 h-2.5 w-2.5">
					<span className="absolute inset-x-0 top-1 h-0.5 bg-[#2b3048]" />
					<span className="absolute inset-y-0 left-1 w-0.5 bg-[#2b3048]" />
				</button>
				<ToolButton icon="fullscreen" label="全屏" className="mr-3.5 ml-3" />
			</div>
		</footer>
	);
};

const Popup = () => (
	<div role="alert" className="absolute right-1.5 bottom-[93px] z-30 h-[75px] w-[269px] border border-[#10131b] bg-[#1c202b] shadow-[0_0_6px_rgba(0,0,0,0.45)]">
		<svg width="42" height="42" viewBox="0 0 42 42" className="absolute -top-[12px] left-[15px]" aria-hidden="true">
			<circle cx="21" cy="21" r="20" fill="#393e4d" stroke="#20242f" />
			<path d="M21 33c-7-4-11-10-10.500-19c7-3 14-3 21 0c.5 9-3.500 15-10.500 19z" fill="none" stroke="#cdd3e2" strokeWidth="2.200" />
			<path d="M11 16l10 8l10-8" fill="none" stroke="#cdd3e2" strokeWidth="2.200" />
		</svg>
		<button type="button" aria-label="关闭提示" className="absolute top-[6px] right-[5px] text-[#747a88]">
			<Icon name="close" />
		</button>
		<p className="mt-2 ml-[72px] text-[13px] leading-5 text-white">
			有 <span className="text-[#f5d312]">23</span> 个无用的残留进程
		</p>
		<div className="mt-3.5 flex items-center justify-between pr-2 pl-[15px]">
			<span className="text-[#70747f]">立即加速释放电脑内存</span>
			<button type="button" className="h-[21px] w-[72px] bg-[#00c07b] text-white">立即加速</button>
		</div>
	</div>
);

const Watermark = () => (
	<div className="pointer-events-none absolute right-2.5 bottom-1.5 z-40 flex items-start opacity-80">
		<svg width="44" height="42" viewBox="0 0 44 42" aria-hidden="true">
			<defs>
				<linearGradient id="sky" x1="0" y1="1" x2="1" y2="0">
					<stop offset="0" stopColor="#2f6fc0" />
					<stop offset="1" stopColor="#5cc4f0" />
				</linearGradient>
				<linearGradient id="leaf" x1="0" y1="1" x2="1" y2="0">
					<stop offset="0" stopColor="#e3dc3a" />
					<stop offset=".5" stopColor="#6cc45c" />
					<stop offset="1" stopColor="#35b183" />
				</linearGradient>
			</defs>
			<path d="M43 1C26-1 5 7 1 23c-1.500 5 1 9 4 10C3 22 18 8 43 1z" fill="url(#sky)" />
			<path d="M33 15c10 3 11 11 5 17C31 39 15 43 4 41c9-2 18-4 23-9c5-5 8-10 6-17z" fill="url(#leaf)" />
			<path d="M33 15C24 9 10 15 9 24c-1 7 7 10 13 7c5-2 6-8 1-9c-3-1-6 0-7 3c-3-4 3-8 8-7c6 1 7 8 3 12c-6 6-19 6-21-3C4 17 18 7 33 15z" fill="url(#sky)" />
		</svg>
		<div>
			<p className="text-[21px] leading-6 font-bold text-[#4d94d6]">极光下载站</p>
			<p className="text-base leading-5 font-semibold text-[#4cba6c]">www.xz7.com</p>
		</div>
	</div>
);

const styles = {
	corner: "border-r border-b border-[#a9afc4] bg-[#f5f7f9] p-0",
	col: "border-r border-b border-r-[#dcdfe6] border-b-[#a9afc9] bg-[#f5f7f9] p-0 font-normal",
	colOn: "border-r border-b border-r-[#c5c9d5] border-b-[#a9afc9] bg-[#d1d4dd] p-0 font-normal text-[#22b97a]",
	row: "border-r border-b border-r-[#a9afc4] border-b-[#c5cad8] bg-[#f5f7f9] p-0 text-2xl leading-7 font-normal text-black",
	rowOn: "border-r border-b border-r-[#a9afc4] border-b-[#c5cad8] bg-[#d1d4dd] p-0 text-2xl leading-7 font-normal text-[#22b97a]",
	cell: "border-r border-b border-[#c1c6d8] bg-[#cde8cf] p-0 pl-1 text-2xl leading-7 font-light whitespace-nowrap text-black",
	cellOn: "border-r border-b border-[#a5b3b8] bg-[#afc7b1] p-0 pl-1 text-2xl leading-7 font-light whitespace-nowrap text-black",
	decimal: "ml-2 flex w-[17px] flex-col items-end text-[9px] leading-[12px] font-medium",
	paneButton: "h-6 w-16 border border-[#e2e4e9] bg-[#fafbfc] text-[#8d96ad]",
	range: "h-3 w-[148px] appearance-none bg-[linear-gradient(#2b3048,#2b3048)] bg-[length:100%_1px] bg-center bg-no-repeat [&::-webkit-slider-thumb]:h-3 [&::-webkit-slider-thumb]:w-3 [&::-webkit-slider-thumb]:appearance-none [&::-webkit-slider-thumb]:rounded-full [&::-webkit-slider-thumb]:border [&::-webkit-slider-thumb]:border-[#2b3048] [&::-webkit-slider-thumb]:bg-[#f0f0f2]",
};

const App = () => (
	<div className="relative flex h-screen flex-col overflow-hidden bg-[#f5f7f9] font-['Noto_Sans','Noto_Sans_CJK_SC',sans-serif] text-xs text-[#2b3048]">
		<TitleBar />
		<MenuBar />
		<Ribbon />
		<div className="flex min-h-0 flex-1">
			<main className="flex min-w-0 flex-1 flex-col">
				<FormulaBar />
				<div className="flex min-h-0 flex-1">
					<Sheet />
					<VerticalScroll />
				</div>
				<SheetTabs />
			</main>
			<SelectionPane />
			<SideBar />
		</div>
		<StatusBar />
		<MiniToolbar />
		<ContextMenu />
		<Arrow />
		<Popup />
		<Watermark />
	</div>
);

export default App;
